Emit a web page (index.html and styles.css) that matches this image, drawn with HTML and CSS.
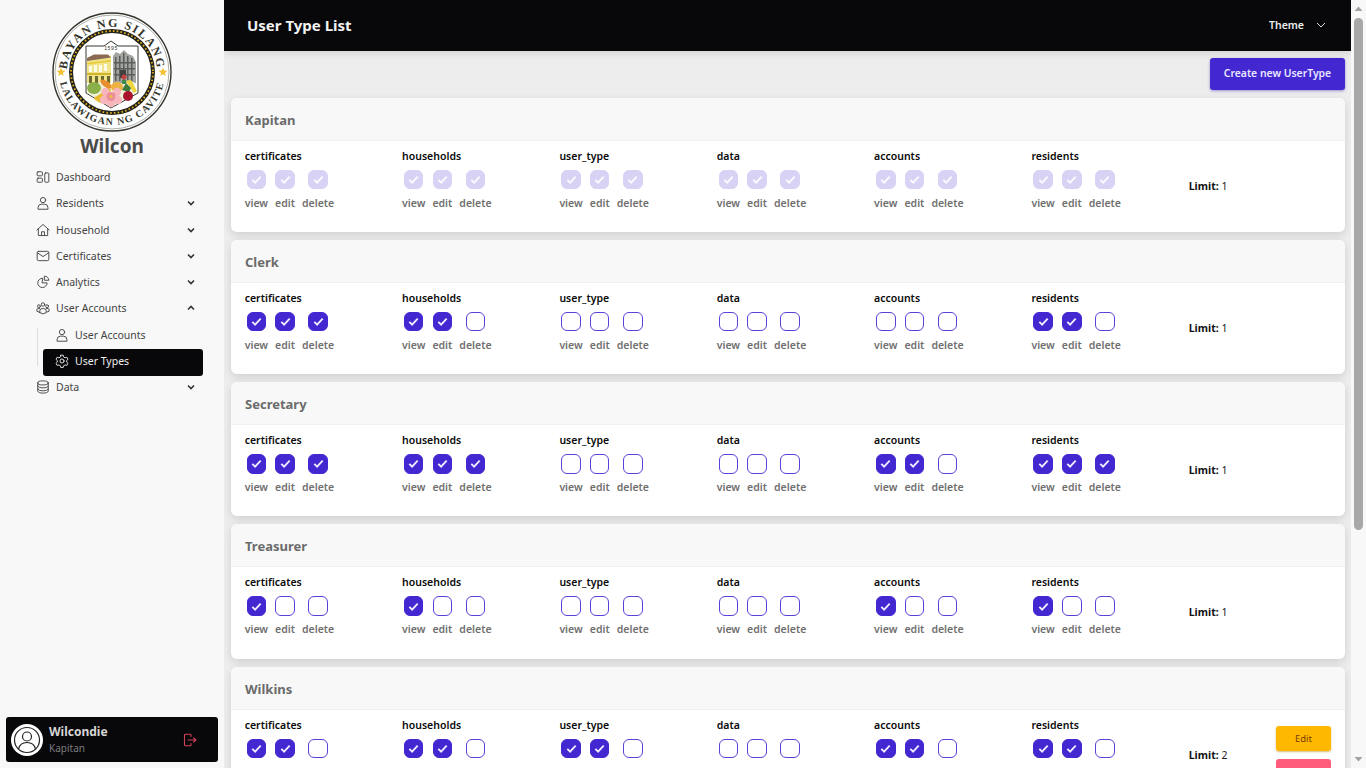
FILE: index.html
```html
<!DOCTYPE html>
<html lang="en">
<head>
<meta charset="utf-8">
<title>User Type List</title>
<link rel="stylesheet" href="styles.css">
</head>
<body>
<div class="app">
  <aside class="sidebar">
    <div class="brand">
      <svg class="seal" viewBox="0 0 124 124" width="124" height="124">
        <defs>
          <path id="arcTop" d="M 17 62 A 45 45 0 0 1 107 62"/>
          <path id="arcBottom" d="M 9 62 A 53 53 0 0 0 115 62"/>
        </defs>
        <circle cx="62" cy="62" r="59" fill="#fff" stroke="#33352a" stroke-width="1.4"/>
        <circle cx="62" cy="62" r="57" fill="none" stroke="#33352a" stroke-width=".4"/>
        <text class="seal-text"><textPath href="#arcTop" startOffset="50%" text-anchor="middle">BAYAN NG SILANG</textPath></text>
        <text class="seal-text small"><textPath href="#arcBottom" startOffset="50%" text-anchor="middle">LALAWIGAN NG CAVITE</textPath></text>
        <polygon points="11,57.500 12.200,60.600 15.500,60.800 12.900,62.900 13.800,66 11,64.300 8.200,66 9.100,62.900 6.500,60.800 9.800,60.600" fill="#f1c232"/>
        <polygon points="113,57.500 114.200,60.600 117.500,60.800 114.900,62.900 115.800,66 113,64.300 110.200,66 111.100,62.900 108.500,60.800 111.800,60.600" fill="#f1c232"/>
        <circle cx="62" cy="62" r="41" fill="#fff" stroke="#23231c" stroke-width="4"/>
        <circle cx="62" cy="62" r="41" fill="none" stroke="#e0b020" stroke-width="1.800" stroke-dasharray="1.600 2.200"/>
        <path d="M36 36H54L61 31L68 36H88V83L61 98L36 83Z" fill="#fff" stroke="#23231c" stroke-width=".9"/>
        <text class="seal-year" x="61" y="40" text-anchor="middle">1595</text>
        <path d="M37 50L61 45.500V73H37Z" fill="#f0e48a"/>
        <path d="M37 48L44 44.500H58L61 47.500L37 51Z" fill="#8a6a52"/>
        <path d="M37 53L61 50V51.500L37 54.500Z" fill="#e7c92f"/>
        <path d="M39 56h3v6h-3zM44 55h3v7h-3zM49 55h3v7h-3zM54 54h3v7h-3z" fill="#fdfbe8"/>
        <path d="M37 63H61V65H37Z" fill="#d3b52a"/>
        <path d="M39 66h3v7h-3zM45 66h3v7h-3zM51 66h3v7h-3zM57 66h3v7h-3z" fill="#6b6a2e"/>
        <path d="M63 73V46L66 42L70 44L74 40L78 44L83 46L86 52V73Z" fill="#a3a5a0"/>
        <path d="M65 47h1.500v24H65zM69 46h1.500v25H69zM73 43h1.500v27H73zM77 46h1.500v24H77zM81 48h1.500v23H81zM64 52h21v1.500H64zM64 58h21v1.500H64zM64 64h21v1.500H64z" fill="#5b5d5a"/>
        <path d="M70 60h6v8h-6z" fill="#3f413f"/>
        <path d="M38 78L50 72L64 75L84 72L86.500 82L61 97L37 83Z" fill="#eef0d8"/>
        <path d="M45 87Q52 84 58 76L61 80Q57 92 50 93L44 89Z" fill="#e8bb2c"/>
        <ellipse cx="44" cy="78" rx="7" ry="6" fill="#8bb04a"/>
        <ellipse cx="56" cy="74" rx="6.500" ry="3" fill="#e98e2f" transform="rotate(35 56 74)"/>
        <ellipse cx="67" cy="77" rx="6" ry="5" fill="#eeb240"/>
        <path d="M76 71L81 70L87 81L84 83Z" fill="#eed63a"/>
        <path d="M72 80L76 73L81 78L79 82Z" fill="#3f7a3a"/>
        <circle cx="74" cy="67" r="2.500" fill="#c43f3f"/>
        <path d="M72 70h4v4h-4z" fill="#3f8a4a"/>
        <circle cx="78" cy="86" r="5" fill="#a9142c"/>
        <circle cx="55.500" cy="82" r="4.200" fill="#f6b6bc"/><circle cx="67" cy="82" r="4.200" fill="#f6b6bc"/>
        <circle cx="54" cy="90" r="4.200" fill="#f6b6bc"/><circle cx="68" cy="90" r="4.200" fill="#f6b6bc"/>
        <circle cx="61" cy="93" r="4.200" fill="#f6b6bc"/><circle cx="61" cy="86.500" r="4.500" fill="#ec8e9a"/>
        <circle cx="61" cy="86.500" r="1.500" fill="#e5c33c"/>
      </svg>
      <div class="brand-name">Wilcon</div>
    </div>
    <nav class="menu">
      <a class="menu-item"><svg class="ico" viewBox="0 0 24 24"><rect x="2" y="3" width="9" height="7" rx="1.500"/><rect x="2" y="14" width="9" height="7" rx="1.500"/><rect x="15" y="5" width="7" height="16" rx="1.500"/></svg><span>Dashboard</span></a>
      <a class="menu-item"><svg class="ico" viewBox="0 0 24 24"><circle cx="12" cy="7" r="4.500"/><path d="M3.500 22v-2a6 6 0 0 1 6-6h5a6 6 0 0 1 6 6v2z"/></svg><span>Residents</span><svg class="chev" viewBox="0 0 10 10"><path d="M2 3.500L5 6.500L8 3.500"/></svg></a>
      <a class="menu-item"><svg class="ico" viewBox="0 0 24 24"><path d="M1.500 12L12 2.500L22.500 12M4 10v11.500h16V10"/><path d="M9.500 21.500V15h5v6.500"/></svg><span>Household</span><svg class="chev" viewBox="0 0 10 10"><path d="M2 3.500L5 6.500L8 3.500"/></svg></a>
      <a class="menu-item"><svg class="ico" viewBox="0 0 24 24"><rect x="2" y="4" width="20" height="16" rx="2.500"/><path d="M2.500 6.500L12 13L21.500 6.500"/></svg><span>Certificates</span><svg class="chev" viewBox="0 0 10 10"><path d="M2 3.500L5 6.500L8 3.500"/></svg></a>
      <a class="menu-item"><svg class="ico" viewBox="0 0 24 24"><path d="M11 5.500a8 8 0 1 0 8 8h-8z"/><path d="M15 2a7 7 0 0 1 7 7h-7z"/></svg><span>Analytics</span><svg class="chev" viewBox="0 0 10 10"><path d="M2 3.500L5 6.500L8 3.500"/></svg></a>
      <a class="menu-item"><svg class="ico" viewBox="0 0 24 24"><circle cx="12" cy="6" r="3"/><circle cx="5" cy="9" r="2.500"/><circle cx="19" cy="9" r="2.500"/><path d="M6.500 20v-3a4 4 0 0 1 4-4h3a4 4 0 0 1 4 4v3a9 9 0 0 1-11 0z"/><path d="M6 13H3.500A2 2 0 0 0 1.500 15v2.500l4 1.500M18 13h2.500a2 2 0 0 1 2 2v2.500l-4 1.500"/></svg><span>User Accounts</span><svg class="chev" viewBox="0 0 10 10"><path d="M2 6.500L5 3.500L8 6.500"/></svg></a>
      <div class="submenu">
        <a class="sub-item"><svg class="ico" viewBox="0 0 24 24"><circle cx="12" cy="7" r="4.500"/><path d="M3.500 22v-2a6 6 0 0 1 6-6h5a6 6 0 0 1 6 6v2z"/></svg><span>User Accounts</span></a>
        <a class="sub-item active"><svg class="ico" viewBox="0 0 24 24"><circle cx="12" cy="12" r="3.500"/><path d="M10 2h4l.7 3 2.600 1.500 3-.9 2 3.400-2.200 2.100v3l2.200 2.100-2 3.400-3-.9-2.600 1.500-.7 3h-4l-.7-3-2.600-1.500-3 .9-2-3.400 2.200-2.100v-3L1.700 9l2-3.400 3 .9L9.300 5z"/></svg><span>User Types</span></a>
      </div>
      <a class="menu-item"><svg class="ico" viewBox="0 0 24 24"><ellipse cx="12" cy="5" rx="9" ry="3.500"/><path d="M3 5v14c0 2 4 3.500 9 3.500s9-1.500 9-3.500V5M3 10c0 2 4 3.500 9 3.500s9-1.500 9-3.500M3 15c0 2 4 3.500 9 3.500s9-1.500 9-3.500"/></svg><span>Data</span><svg class="chev" viewBox="0 0 10 10"><path d="M2 3.500L5 6.500L8 3.500"/></svg></a>
    </nav>
    <div class="user-card">
      <div class="avatar"><svg viewBox="0 0 32 32" width="32" height="32"><circle cx="16" cy="16" r="16" fill="#fff"/><circle cx="16" cy="16" r="12.500" fill="none" stroke="#222" stroke-width="1.200"/><circle cx="16" cy="12.500" r="4.500" fill="none" stroke="#222" stroke-width="1.200"/><path d="M7.500 25c1-4.500 4-6.500 8.500-6.500s7.500 2 8.500 6.500" fill="none" stroke="#222" stroke-width="1.200"/></svg></div>
      <div class="user-text"><div class="user-name">Wilcondie</div><div class="user-role">Kapitan</div></div>
      <svg class="logout" viewBox="0 0 14 14" width="14" height="14"><path d="M8 3.500V2.200A1 1 0 0 0 7 1.200H2.500a1 1 0 0 0-1 1v9.600a1 1 0 0 0 1 1H7a1 1 0 0 0 1-1v-1.300M5 7h8M10.500 4.800L13 7l-2.500 2.200"/></svg>
    </div>
  </aside>

  <main class="main">
    <header class="topbar">
      <h1 class="page-title">User Type List</h1>
      <div class="theme"><span>Theme</span><svg viewBox="0 0 10 10" width="10" height="10"><path d="M1 3L5 7L9 3"/></svg></div>
    </header>
    <div class="toolbar"><button class="btn-create">Create new UserType</button></div>
    <div class="cards">

      <section class="card locked">
        <h2 class="card-title">Kapitan</h2>
        <div class="card-body">
          <div class="perm-group"><h3>certificates</h3><div class="perms"><label><input type="checkbox" checked disabled>view</label><label><input type="checkbox" checked disabled>edit</label><label><input type="checkbox" checked disabled>delete</label></div></div>
          <div class="perm-group"><h3>households</h3><div class="perms"><label><input type="checkbox" checked disabled>view</label><label><input type="checkbox" checked disabled>edit</label><label><input type="checkbox" checked disabled>delete</label></div></div>
          <div class="perm-group"><h3>user_type</h3><div class="perms"><label><input type="checkbox" checked disabled>view</label><label><input type="checkbox" checked disabled>edit</label><label><input type="checkbox" checked disabled>delete</label></div></div>
          <div class="perm-group"><h3>data</h3><div class="perms"><label><input type="checkbox" checked disabled>view</label><label><input type="checkbox" checked disabled>edit</label><label><input type="checkbox" checked disabled>delete</label></div></div>
          <div class="perm-group"><h3>accounts</h3><div class="perms"><label><input type="checkbox" checked disabled>view</label><label><input type="checkbox" checked disabled>edit</label><label><input type="checkbox" checked disabled>delete</label></div></div>
          <div class="perm-group"><h3>residents</h3><div class="perms"><label><input type="checkbox" checked disabled>view</label><label><input type="checkbox" checked disabled>edit</label><label><input type="checkbox" checked disabled>delete</label></div></div>
          <div class="limit"><b>Limit:</b> 1</div>
        </div>
      </section>

      <section class="card">
        <h2 class="card-title">Clerk</h2>
        <div class="card-body">
          <div class="perm-group"><h3>certificates</h3><div class="perms"><label><input type="checkbox" checked>view</label><label><input type="checkbox" checked>edit</label><label><input type="checkbox" checked>delete</label></div></div>
          <div class="perm-group"><h3>households</h3><div class="perms"><label><input type="checkbox" checked>view</label><label><input type="checkbox" checked>edit</label><label><input type="checkbox">delete</label></div></div>
          <div class="perm-group"><h3>user_type</h3><div class="perms"><label><input type="checkbox">view</label><label><input type="checkbox">edit</label><label><input type="checkbox">delete</label></div></div>
          <div class="perm-group"><h3>data</h3><div class="perms"><label><input type="checkbox">view</label><label><input type="checkbox">edit</label><label><input type="checkbox">delete</label></div></div>
          <div class="perm-group"><h3>accounts</h3><div class="perms"><label><input type="checkbox">view</label><label><input type="checkbox">edit</label><label><input type="checkbox">delete</label></div></div>
          <div class="perm-group"><h3>residents</h3><div class="perms"><label><input type="checkbox" checked>view</label><label><input type="checkbox" checked>edit</label><label><input type="checkbox">delete</label></div></div>
          <div class="limit"><b>Limit:</b> 1</div>
        </div>
      </section>

      <section class="card">
        <h2 class="card-title">Secretary</h2>
        <div class="card-body">
          <div class="perm-group"><h3>certificates</h3><div class="perms"><label><input type="checkbox" checked>view</label><label><input type="checkbox" checked>edit</label><label><input type="checkbox" checked>delete</label></div></div>
          <div class="perm-group"><h3>households</h3><div class="perms"><label><input type="checkbox" checked>view</label><label><input type="checkbox" checked>edit</label><label><input type="checkbox" checked>delete</label></div></div>
          <div class="perm-group"><h3>user_type</h3><div class="perms"><label><input type="checkbox">view</label><label><input type="checkbox">edit</label><label><input type="checkbox">delete</label></div></div>
          <div class="perm-group"><h3>data</h3><div class="perms"><label><input type="checkbox">view</label><label><input type="checkbox">edit</label><label><input type="checkbox">delete</label></div></div>
          <div class="perm-group"><h3>accounts</h3><div class="perms"><label><input type="checkbox" checked>view</label><label><input type="checkbox" checked>edit</label><label><input type="checkbox">delete</label></div></div>
          <div class="perm-group"><h3>residents</h3><div class="perms"><label><input type="checkbox" checked>view</label><label><input type="checkbox" checked>edit</label><label><input type="checkbox" checked>delete</label></div></div>
          <div class="limit"><b>Limit:</b> 1</div>
        </div>
      </section>

      <section class="card">
        <h2 class="card-title">Treasurer</h2>
        <div class="card-body">
          <div class="perm-group"><h3>certificates</h3><div class="perms"><label><input type="checkbox" checked>view</label><label><input type="checkbox">edit</label><label><input type="checkbox">delete</label></div></div>
          <div class="perm-group"><h3>households</h3><div class="perms"><label><input type="checkbox" checked>view</label><label><input type="checkbox">edit</label><label><input type="checkbox">delete</label></div></div>
          <div class="perm-group"><h3>user_type</h3><div class="perms"><label><input type="checkbox">view</label><label><input type="checkbox">edit</label><label><input type="checkbox">delete</label></div></div>
          <div class="perm-group"><h3>data</h3><div class="perms"><label><input type="checkbox">view</label><label><input type="checkbox">edit</label><label><input type="checkbox">delete</label></div></div>
          <div class="perm-group"><h3>accounts</h3><div class="perms"><label><input type="checkbox" checked>view</label><label><input type="checkbox">edit</label><label><input type="checkbox">delete</label></div></div>
          <div class="perm-group"><h3>residents</h3><div class="perms"><label><input type="checkbox" checked>view</label><label><input type="checkbox">edit</label><label><input type="checkbox">delete</label></div></div>
          <div class="limit"><b>Limit:</b> 1</div>
        </div>
      </section>

      <section class="card">
        <h2 class="card-title">Wilkins</h2>
        <div class="card-body">
          <div class="perm-group"><h3>certificates</h3><div class="perms"><label><input type="checkbox" checked>view</label><label><input type="checkbox" checked>edit</label><label><input type="checkbox">delete</label></div></div>
          <div class="perm-group"><h3>households</h3><div class="perms"><label><input type="checkbox" checked>view</label><label><input type="checkbox" checked>edit</label><label><input type="checkbox">delete</label></div></div>
          <div class="perm-group"><h3>user_type</h3><div class="perms"><label><input type="checkbox" checked>view</label><label><input type="checkbox" checked>edit</label><label><input type="checkbox">delete</label></div></div>
          <div class="perm-group"><h3>data</h3><div class="perms"><label><input type="checkbox">view</label><label><input type="checkbox">edit</label><label><input type="checkbox">delete</label></div></div>
          <div class="perm-group"><h3>accounts</h3><div class="perms"><label><input type="checkbox" checked>view</label><label><input type="checkbox" checked>edit</label><label><input type="checkbox">delete</label></div></div>
          <div class="perm-group"><h3>residents</h3><div class="perms"><label><input type="checkbox" checked>view</label><label><input type="checkbox" checked>edit</label><label><input type="checkbox">delete</label></div></div>
          <div class="limit"><b>Limit:</b> 2</div>
          <div class="actions"><button class="btn-edit">Edit</button><button class="btn-delete">Delete</button></div>
        </div>
      </section>

    </div>
  </main>

  <div class="scrollbar">
    <svg class="scroll-arrow" viewBox="0 0 15 17" width="15" height="17"><path d="M3.500 11L7.500 6.500L11.500 11Z"/></svg>
    <div class="scroll-track"><div class="scroll-thumb"></div></div>
    <svg class="scroll-arrow" viewBox="0 0 15 17" width="15" height="17"><path d="M3.500 6L7.500 10.500L11.500 6Z"/></svg>
  </div>
</div>
</body>
</html>
```
FILE: styles.css
```css
* { box-sizing: border-box; }
html, body { margin: 0; height: 100%; overflow: hidden; }
body { font-family: "Noto Sans", "Open Sans", sans-serif; font-size: 10.5px; color: #444; background: #ececec; }
.app { display: flex; height: 100vh; }

/* sidebar */
.sidebar { width: 224px; flex: none; background: #f8f8f8; display: flex; flex-direction: column; padding: 10px 6px 6px; }
.brand { display: flex; flex-direction: column; align-items: center; }
.seal { display: block; }
.seal-text { font-family: "Liberation Serif", serif; font-size: 12px; font-weight: 700; letter-spacing: 1.7px; fill: #33352a; }
.seal-text.small { font-size: 10px; letter-spacing: 1.25px; }
.seal-year { font-family: "Liberation Sans", sans-serif; font-size: 5px; letter-spacing: .6px; fill: #33352a; }
.brand-name { font-size: 19px; font-weight: 700; line-height: 24px; margin-top: -.5px; color: #4a4a4a; }
.menu { padding: 0 15px 0 22px; margin-top: 7.700px; flex: 1; display: flex; flex-direction: column; }
.menu-item, .sub-item { display: flex; align-items: center; height: 26.33px; padding-bottom: 3px; color: #444; gap: 6px; }
.menu-item { padding-left: 8px; padding-right: 7px; }
.menu-item span { flex: 1; }
.ico { width: 14px; height: 14px; flex: none; fill: none; stroke: currentColor; stroke-width: 1.6; stroke-linejoin: round; stroke-linecap: round; }
.chev { width: 10px; height: 10px; flex: none; fill: none; stroke: #333; stroke-width: 1.6; }
.submenu { margin-left: 9px; padding-left: 6px; position: relative; }
.submenu::before { content: ""; position: absolute; left: 0; top: 5px; bottom: 10px; width: 1px; background: #ddd; }
.sub-item { padding-left: 12px; border-radius: 3px; }
.sub-item.active { background: #08080a; color: #eee; }
.user-card { display: flex; align-items: center; height: 45px; background: #08080a; border-radius: 3px; padding: 0 21px 0 5px; }
.avatar { width: 32px; height: 32px; flex: none; }
.avatar svg { display: block; }
.user-text { flex: 1; margin-left: 6px; }
.user-name { font-size: 12px; line-height: 16px; font-weight: 700; color: #d6d6d6; }
.user-role { font-size: 10px; line-height: 14px; color: #7d7d7d; padding-top: 1px; }
.logout { fill: none; stroke: #d2405c; stroke-width: 1.1; stroke-linecap: round; stroke-linejoin: round; }

/* main */
.main { flex: 1; min-width: 0; height: 100vh; overflow: hidden; background: #ededed; }
.topbar { height: 51px; background: #08080a; color: #eee; display: flex; align-items: center; justify-content: space-between; padding: 0 25px 2px 23px; box-shadow: 0 2px 8px rgba(0,0,0,.12); position: relative; }
.page-title { margin: 0; font-size: 15px; font-weight: 700; color: #f2f2f2; }
.theme { display: flex; align-items: center; gap: 12px; font-size: 10.5px; font-weight: 600; }
.theme svg { fill: none; stroke: #ddd; stroke-width: 1; }
.toolbar { display: flex; justify-content: flex-end; height: 46.800px; padding: 7px 6px 0 0; }
.btn-create { width: 135px; height: 32px; border: 0; border-radius: 3px; background: #4328d2; color: #e9e6ff; font: 600 10.4px "Noto Sans", sans-serif; padding: 0 0 3px; box-shadow: 0 1px 3px rgba(50,30,180,.45); }
.cards { padding: 0 6px 0 7px; display: flex; flex-direction: column; gap: 8px; }
.card { background: #fff; border-radius: 6px; box-shadow: 0 3px 8px rgba(0,0,0,.13); overflow: hidden; }
.card-title { margin: 0; height: 43px; background: #f8f8f8; border-bottom: 1px solid #f0f0f0; padding: 2px 14px 0; display: flex; align-items: center; font-size: 13px; font-weight: 700; color: #6b6b6b; }
.card-body { display: grid; grid-template-columns: repeat(6, 157.35px) 1fr auto; align-items: center; min-height: 91.2px; padding: 8px 14px 9px 13.700px; }
.perm-group { align-self: start; }
.perm-group h3 { margin: 0 0 7px; font-size: 10.5px; line-height: 14px; font-weight: 600; color: #0a0a0a; }
.perms { display: flex; gap: 7px; }
.perms label { display: flex; flex-direction: column; align-items: center; gap: 6.500px; font-size: 10.5px; line-height: 14px; font-weight: 600; color: #6f6f6f; }
.perms input { appearance: none; -webkit-appearance: none; margin: 0; width: 19.500px; height: 19.500px; border: 1.500px solid #5a40d8; border-radius: 6px; background: #fff center/13px no-repeat; }
.perms input:checked { border-color: #4328d2; background-color: #4328d2; background-image: url("data:image/svg+xml,%3Csvg xmlns='http://www.w3.org/2000/svg' viewBox='0 0 14 14'%3E%3Cpath d='M2.500 7.500L5.500 10.500L11.500 4' fill='none' stroke='%23eeeaff' stroke-width='2'/%3E%3C/svg%3E"); }
.locked .perms input:checked { opacity: .2; }
.limit { font-size: 10.5px; color: #222; }
.limit b { font-weight: 700; color: #111; }
.actions { display: flex; flex-direction: column; gap: 8px; }
.actions button { width: 55px; height: 25px; border: 0; border-radius: 3px; font: 400 9.5px "Noto Sans", sans-serif; }
.btn-edit { background: #ffb800; color: #7a3d00; box-shadow: 0 1px 2px rgba(180,120,0,.5); }
.btn-delete { background: #ff5c7c; color: #7a1020; }

/* window scrollbar */
.scrollbar { width: 15px; flex: none; height: 100vh; background: #f8f8f8; display: flex; flex-direction: column; }
.scroll-arrow { display: block; flex: none; fill: #a3a3a3; }
.scroll-track { flex: 1; padding: 1px 3px 0; }
.scroll-thumb { height: 512px; background: #a8a8a8; border-radius: 5px; }
```
